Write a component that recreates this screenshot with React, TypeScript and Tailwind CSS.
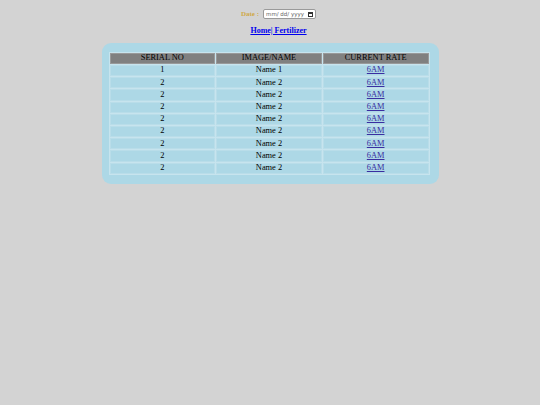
export default function App() {
  const rows = [
    { serial: '1', name: 'Name 1' },
    ...Array.from({ length: 8 }, () => ({ serial: '2', name: 'Name 2' })),
  ];

  return (
    <div className="min-h-[405px] bg-[#d3d3d3] font-['Liberation_Serif',serif] text-[8px] text-black">
      <div className="flex flex-col items-center pt-[9px]">
        {/* Date picker */}
        <div className="ml-[17px] flex items-center gap-[4px] h-[10px]">
          <span className="text-[7px] font-bold text-[#cfa846]">Date :</span>
          <div className="flex items-center justify-between w-[53px] h-[10px] bg-white border border-[#9a9a9a] rounded-[2px] pl-[2px] pr-[2px] text-[5.5px] text-[#666] font-['DejaVu_Sans',sans-serif]">
            <span>mm/ dd/ yyyy</span>
            <span className="w-[5px] h-[5px] border border-[#333] border-t-2" />
          </div>
        </div>

        <a href="#" className="ml-[17px] mt-[7px] leading-[10px] font-bold text-[#0000ee] underline">
          Home| Fertilizer
        </a>

        {/* Table card */}
        <div className="mt-[7px] w-[337px] rounded-[9px] bg-[#add8e6] pl-[7px] pr-[9px] pt-[9px] pb-[9px]">
          <table className="table-fixed w-[321px] border-separate border-spacing-[1px] bg-[#c7e4ee] text-center text-[8.4px]">
            <thead>
              <tr>
                <th className="w-1/3 h-[11px] p-0 font-normal bg-[#808080] border border-[#999] leading-none">SERIAL NO</th>
                <th className="w-1/3 h-[11px] p-0 font-normal bg-[#808080] border border-[#999] leading-none">IMAGE/NAME</th>
                <th className="w-1/3 h-[11px] p-0 font-normal bg-[#808080] border border-[#999] leading-none">CURRENT RATE</th>
              </tr>
            </thead>
            <tbody>
              {rows.map((r, i) => (
                <tr key={i}>
                  <td className="h-[11.2px] p-0 bg-[#add8e6] border border-[#b9dde9] leading-none">{r.serial}</td>
                  <td className="h-[11.2px] p-0 bg-[#add8e6] border border-[#b9dde9] leading-none">{r.name}</td>
                  <td className="h-[11.2px] p-0 bg-[#add8e6] border border-[#b9dde9] leading-none">
                    <a href="#" className="text-[#3a2ea0] underline">6AM</a>
                  </td>
                </tr>
              ))}
            </tbody>
          </table>
        </div>
      </div>
    </div>
  );
}
